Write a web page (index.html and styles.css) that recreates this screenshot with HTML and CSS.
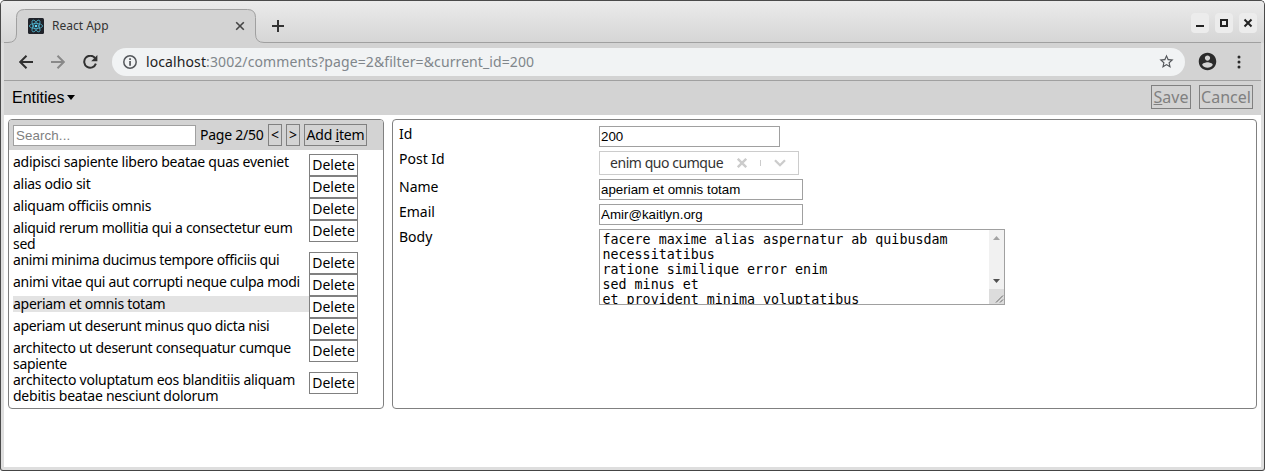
FILE: index.html
```html
<!DOCTYPE html>
<html lang="en">
<head>
<meta charset="utf-8">
<title>React App</title>
<link rel="stylesheet" href="styles.css">
</head>
<body>
<div class="window">
  <header class="titlebar">
    <svg class="tab-shape" width="1257" height="36" viewBox="0 0 1257 36"><path d="M0 34.500H4Q12.500 34.500 12.500 26V9.500Q12.500 1.500 20.500 1.500H243.500Q251.500 1.500 251.500 9.500V26Q251.500 34.500 260 34.500V36H0Z" fill="#d3d3d3"/><path d="M0 34.500H4Q12.500 34.500 12.500 26V9.500Q12.500 1.500 20.500 1.500H243.500Q251.500 1.500 251.500 9.500V26Q251.500 34.500 260 34.500H1257" fill="none" stroke="#a0a0a0"/></svg>
    <div class="tab">
      <svg width="16" height="16" viewBox="0 0 16 16"><rect width="16" height="16" rx="1.500" fill="#20232a"/><g fill="none" stroke="#4fb3cc" stroke-width=".8"><ellipse cx="8" cy="8" rx="6.600" ry="2.600"/><ellipse cx="8" cy="8" rx="6.600" ry="2.600" transform="rotate(60 8 8)"/><ellipse cx="8" cy="8" rx="6.600" ry="2.600" transform="rotate(120 8 8)"/></g><circle cx="8" cy="8" r="1.300" fill="#61dafb"/></svg>
      <span class="tab-title">React App</span>
      <svg width="10" height="10" viewBox="0 0 10 10" stroke="#444" stroke-width="1.600"><path d="M1.200 1.200l7.600 7.600M8.800 1.200l-7.600 7.600"/></svg>
    </div>
    <svg class="new-tab" width="12" height="12" viewBox="0 0 12 12" stroke="#333" stroke-width="2"><path d="M6 0v12M0 6h12"/></svg>
    <div class="controls">
      <span class="control"><svg width="18" height="20" viewBox="0 0 18 20"><path d="M5 12h8v2H5z" fill="#222"/></svg></span>
      <span class="control"><svg width="18" height="20" viewBox="0 0 18 20"><path d="M6 7h6v6H6z" fill="none" stroke="#222" stroke-width="2"/></svg></span>
      <span class="control"><svg width="18" height="20" viewBox="0 0 18 20"><path d="M5.500 6.500l7 7M12.500 6.500l-7 7" stroke="#222" stroke-width="2"/></svg></span>
    </div>
  </header>
  <nav class="toolbar">
    <svg width="14" height="14" viewBox="0 0 14 14" fill="none" stroke="#303030" stroke-width="2"><path d="M14 7H1.500M7.500.700L1.200 7l6.300 6.300"/></svg>
    <svg width="14" height="14" viewBox="0 0 14 14" fill="none" stroke="#898989" stroke-width="2"><path d="M0 7h12.500M6.500.700L12.800 7l-6.300 6.300"/></svg>
    <svg width="15" height="14" viewBox="0 0 15 14"><path d="M12.100 3.200A6 6 0 1 0 12.900 8.700" fill="none" stroke="#303030" stroke-width="2"/><path d="M14.400 0v6.200H8.200z" fill="#303030"/></svg>
    <div class="address">
      <svg width="14" height="14" viewBox="0 0 14 14"><circle cx="7" cy="7" r="6.200" fill="none" stroke="#54575b" stroke-width="1.500"/><path d="M6.200 3.300h1.700v1.600H6.200zM6.200 6h1.700v4.700H6.200z" fill="#54575b"/></svg>
      <span class="url"><b>localhost</b>:3002/comments?page=2&amp;filter=&amp;current_id=200</span>
      <svg width="17" height="17" viewBox="0 0 24 24"><path d="M22 9.240l-7.190-.62L12 2 9.190 8.630 2 9.240l5.460 4.730L5.820 21 12 17.270 18.180 21l-1.630-7.030zM12 15.400l-3.760 2.270 1-4.280-3.320-2.880 4.380-.38L12 6.100l1.710 4.040 4.380.38-3.320 2.880 1 4.280z" fill="#54575b"/></svg>
    </div>
    <svg class="avatar" width="21" height="21" viewBox="0 0 24 24"><path d="M12 2C6.480 2 2 6.480 2 12s4.480 10 10 10 10-4.480 10-10S17.520 2 12 2zm0 3c1.660 0 3 1.340 3 3s-1.340 3-3 3-3-1.340-3-3 1.340-3 3-3zm0 14.200c-2.500 0-4.710-1.280-6-3.220.03-1.990 4-3.080 6-3.080s5.970 1.090 6 3.080c-1.290 1.940-3.500 3.220-6 3.220z" fill="#2b2b2b"/></svg>
    <svg width="4" height="14" viewBox="0 0 4 14" fill="#2b2b2b"><circle cx="2" cy="2" r="1.500"/><circle cx="2" cy="7" r="1.500"/><circle cx="2" cy="12" r="1.500"/></svg>
  </nav>
  <section class="app-bar">
    <div class="menu">Entities<svg width="8" height="5" viewBox="0 0 8 5"><path d="M0 0h8L4 5z"/></svg></div>
    <div class="actions"><button class="btn save"><span><u>S</u>ave</span></button><button class="btn cancel"><span>Cancel</span></button></div>
  </section>
  <main class="content">
    <section class="panel list-panel">
      <div class="list-tools">
        <input class="search" placeholder="Search...">
        <span class="page">Page 2/50</span>
        <button class="btn step">&lt;</button>
        <button class="btn step">&gt;</button>
        <button class="btn add"><span>Add <u>i</u>tem</span></button>
      </div>
      <div class="list">
        <div class="row"><div class="name loose"><span>adipisci sapiente libero beatae quas eveniet</span></div><button class="btn del">Delete</button></div>
        <div class="row"><div class="name"><span>alias odio sit</span></div><button class="btn del">Delete</button></div>
        <div class="row"><div class="name loose"><span>aliquam officiis omnis</span></div><button class="btn del">Delete</button></div>
        <div class="row"><div class="name"><span>aliquid rerum mollitia qui a consectetur eum</span><br><span>sed</span></div><button class="btn del">Delete</button></div>
        <div class="row"><div class="name tight"><span>animi minima ducimus tempore officiis qui</span></div><button class="btn del">Delete</button></div>
        <div class="row"><div class="name"><span>animi vitae qui aut corrupti neque culpa modi</span></div><button class="btn del">Delete</button></div>
        <div class="row"><div class="name current"><span>aperiam et omnis totam</span></div><button class="btn del">Delete</button></div>
        <div class="row"><div class="name tight"><span>aperiam ut deserunt minus quo dicta nisi</span></div><button class="btn del">Delete</button></div>
        <div class="row"><div class="name"><span>architecto ut deserunt consequatur cumque</span><br><span>sapiente</span></div><button class="btn del">Delete</button></div>
        <div class="row"><div class="name loose"><span>architecto voluptatum eos blanditiis aliquam</span><br><span>debitis beatae nesciunt dolorum</span></div><button class="btn del">Delete</button></div>
      </div>
    </section>
    <section class="panel form">
      <label>Id</label><input class="field short" value="200">
      <label>Post Id</label>
      <div class="select"><span class="select-value">enim quo cumque</span>
        <svg width="10" height="10" viewBox="0 0 10 10" stroke="#ccc" stroke-width="2.400"><path d="M.8.800l8.400 8.400M9.200.800L.8 9.200"/></svg>
        <i class="divider"></i>
        <svg width="12" height="8" viewBox="0 0 12 8" fill="none" stroke="#ccc" stroke-width="2.300"><path d="M1 1.200l5 5 5-5"/></svg>
      </div>
      <label>Name</label><input class="field" value="aperiam et omnis totam">
      <label>Email</label><input class="field" value="Amir@kaitlyn.org">
      <label>Body</label>
      <div class="textarea">
        <div class="text">facere maxime alias aspernatur ab quibusdam
necessitatibus
ratione similique error enim
sed minus et
et provident minima voluptatibus</div>
        <svg width="15" height="74" viewBox="0 0 15 74"><path d="M0 0h15v74H0z" fill="#f1f1f1"/><path d="M0 59h15v15H0z" fill="#dcdcdc"/><path d="M4 10h7L7.500 6z" fill="#a3a3a3"/><path d="M4 49h7l-3.500 4z" fill="#505050"/><path d="M7 72.500l7-7M11 72.500l3-3" stroke="#666" fill="none"/></svg>
      </div>
    </section>
  </main>
</div>
</body>
</html>
```
FILE: styles.css
```css
* { box-sizing: border-box; }
body { margin: 0; background: #fff; font: 14px/16px "Noto Sans", sans-serif; color: #000; }
svg { display: block; flex: none; }
.window { width: 1265px; height: 471px; border: 1px solid #4a4a4a; border-bottom-color: #444; border-radius: 5px 5px 3px 3px; padding: 0 3px 3px; background: #dedede; display: flex; flex-direction: column; overflow: hidden; }
.titlebar { height: 42px; margin: 0 -3px; padding: 0 3px; background: linear-gradient(#ebebeb, #d5d5d5); display: flex; align-items: flex-start; position: relative; flex: none; }
.tab-shape { position: absolute; left: 3px; top: 7px; }
.tab { position: relative; display: flex; align-items: center; height: 16px; margin: 17px 0 0 24px; width: 217px; }
.tab-title { font-size: 12px; color: #333; margin-left: 8px; flex: 1; }
.new-tab { margin: 19px 0 0 27px; }
.controls { display: flex; gap: 6px; margin: 12px 4px 0 auto; }
.control { width: 18px; height: 20px; border-radius: 4px; background: #ececec; }
.toolbar { height: 38px; background: #d3d3d3; border-bottom: 1px solid #a0a0a0; display: flex; align-items: center; padding: 0 20px 0 15px; gap: 18px; flex: none; }
.address { width: 1073px; height: 28px; border-radius: 14px; background: #f1f3f4; display: flex; align-items: center; padding: 0 10px 0 11px; margin-left: -4px; flex: none; }
.url { flex: 1; margin-left: 9px; font-size: 14px; letter-spacing: .1px; color: #80868b; }
.url b { font-weight: 400; color: #222; }
.avatar { margin: 0 1px 0 -6px; }
.app-bar { height: 34px; background: #d3d3d3; display: flex; justify-content: space-between; padding: 4px 8px 0; flex: none; }
.menu { font: 16px/25px "Liberation Sans", sans-serif; display: flex; align-items: center; height: 25px; gap: 3px; }
.actions { display: flex; gap: 8px; }
.btn { font: 14px/16px "Noto Sans", sans-serif; color: #000; border: 1px solid #808080; background: transparent; padding: 0; height: 22px; white-space: nowrap; border-radius: 0; flex: none; }
.btn.save, .btn.cancel { font-size: 16px; color: #808080; height: 24px; }
.save { width: 40px; }
.cancel { width: 54px; }
.content { flex: 1; background: #fff; display: flex; gap: 8px; padding: 4px; align-items: flex-start; }
.panel { border: 1px solid #808080; border-radius: 4px; height: 290px; overflow: hidden; }
.list-panel { width: 376px; }
.list-tools { background: #d3d3d3; height: 30px; display: flex; gap: 4px; padding: 4px; }
input { font: 13.333px "Liberation Sans", sans-serif; border: 1px solid #a0a0a0; border-radius: 0; padding: 1px; height: 21px; background: #fff; color: #000; outline: 0; }
.search { width: 183px; margin-top: 1px; padding-left: 2px; letter-spacing: .1px; }
.search::placeholder { color: #808080; }
.page { width: 64px; line-height: 22px; white-space: nowrap; letter-spacing: -.25px; }
.step { width: 14px; }
.btn.add { width: 63px; letter-spacing: -.2px; }
.list { padding: 4px; }
.row { display: flex; align-items: flex-start; }
.name { width: 296px; white-space: nowrap; letter-spacing: -.29px; }
.name.loose { letter-spacing: -.24px; }
.name.tight { letter-spacing: -.35px; }
.current { background: #e3e3e3; }
.del { width: 49px; }
.form { width: 865px; padding: 6px; display: grid; grid-template-columns: 200px 1fr; row-gap: 4px; align-content: start; }
.field { width: 204px; }
.field.short { width: 181px; }
.select { width: 200px; height: 24px; border: 1px solid #ccc; display: flex; align-items: center; color: #333; }
.select-value { width: 113px; margin: 0 14px 0 10px; white-space: nowrap; letter-spacing: -.45px; }
.divider { width: 1px; height: 6px; background: #ccc; margin: 0 13px 0 13px; }
.textarea { width: 406px; height: 76px; border: 1px solid #a0a0a0; display: flex; justify-content: space-between; overflow: hidden; }
.text { font: 13.333px/15px "DejaVu Sans Mono", monospace; white-space: pre; padding: 2px 2px 2px 2.500px; }
```
